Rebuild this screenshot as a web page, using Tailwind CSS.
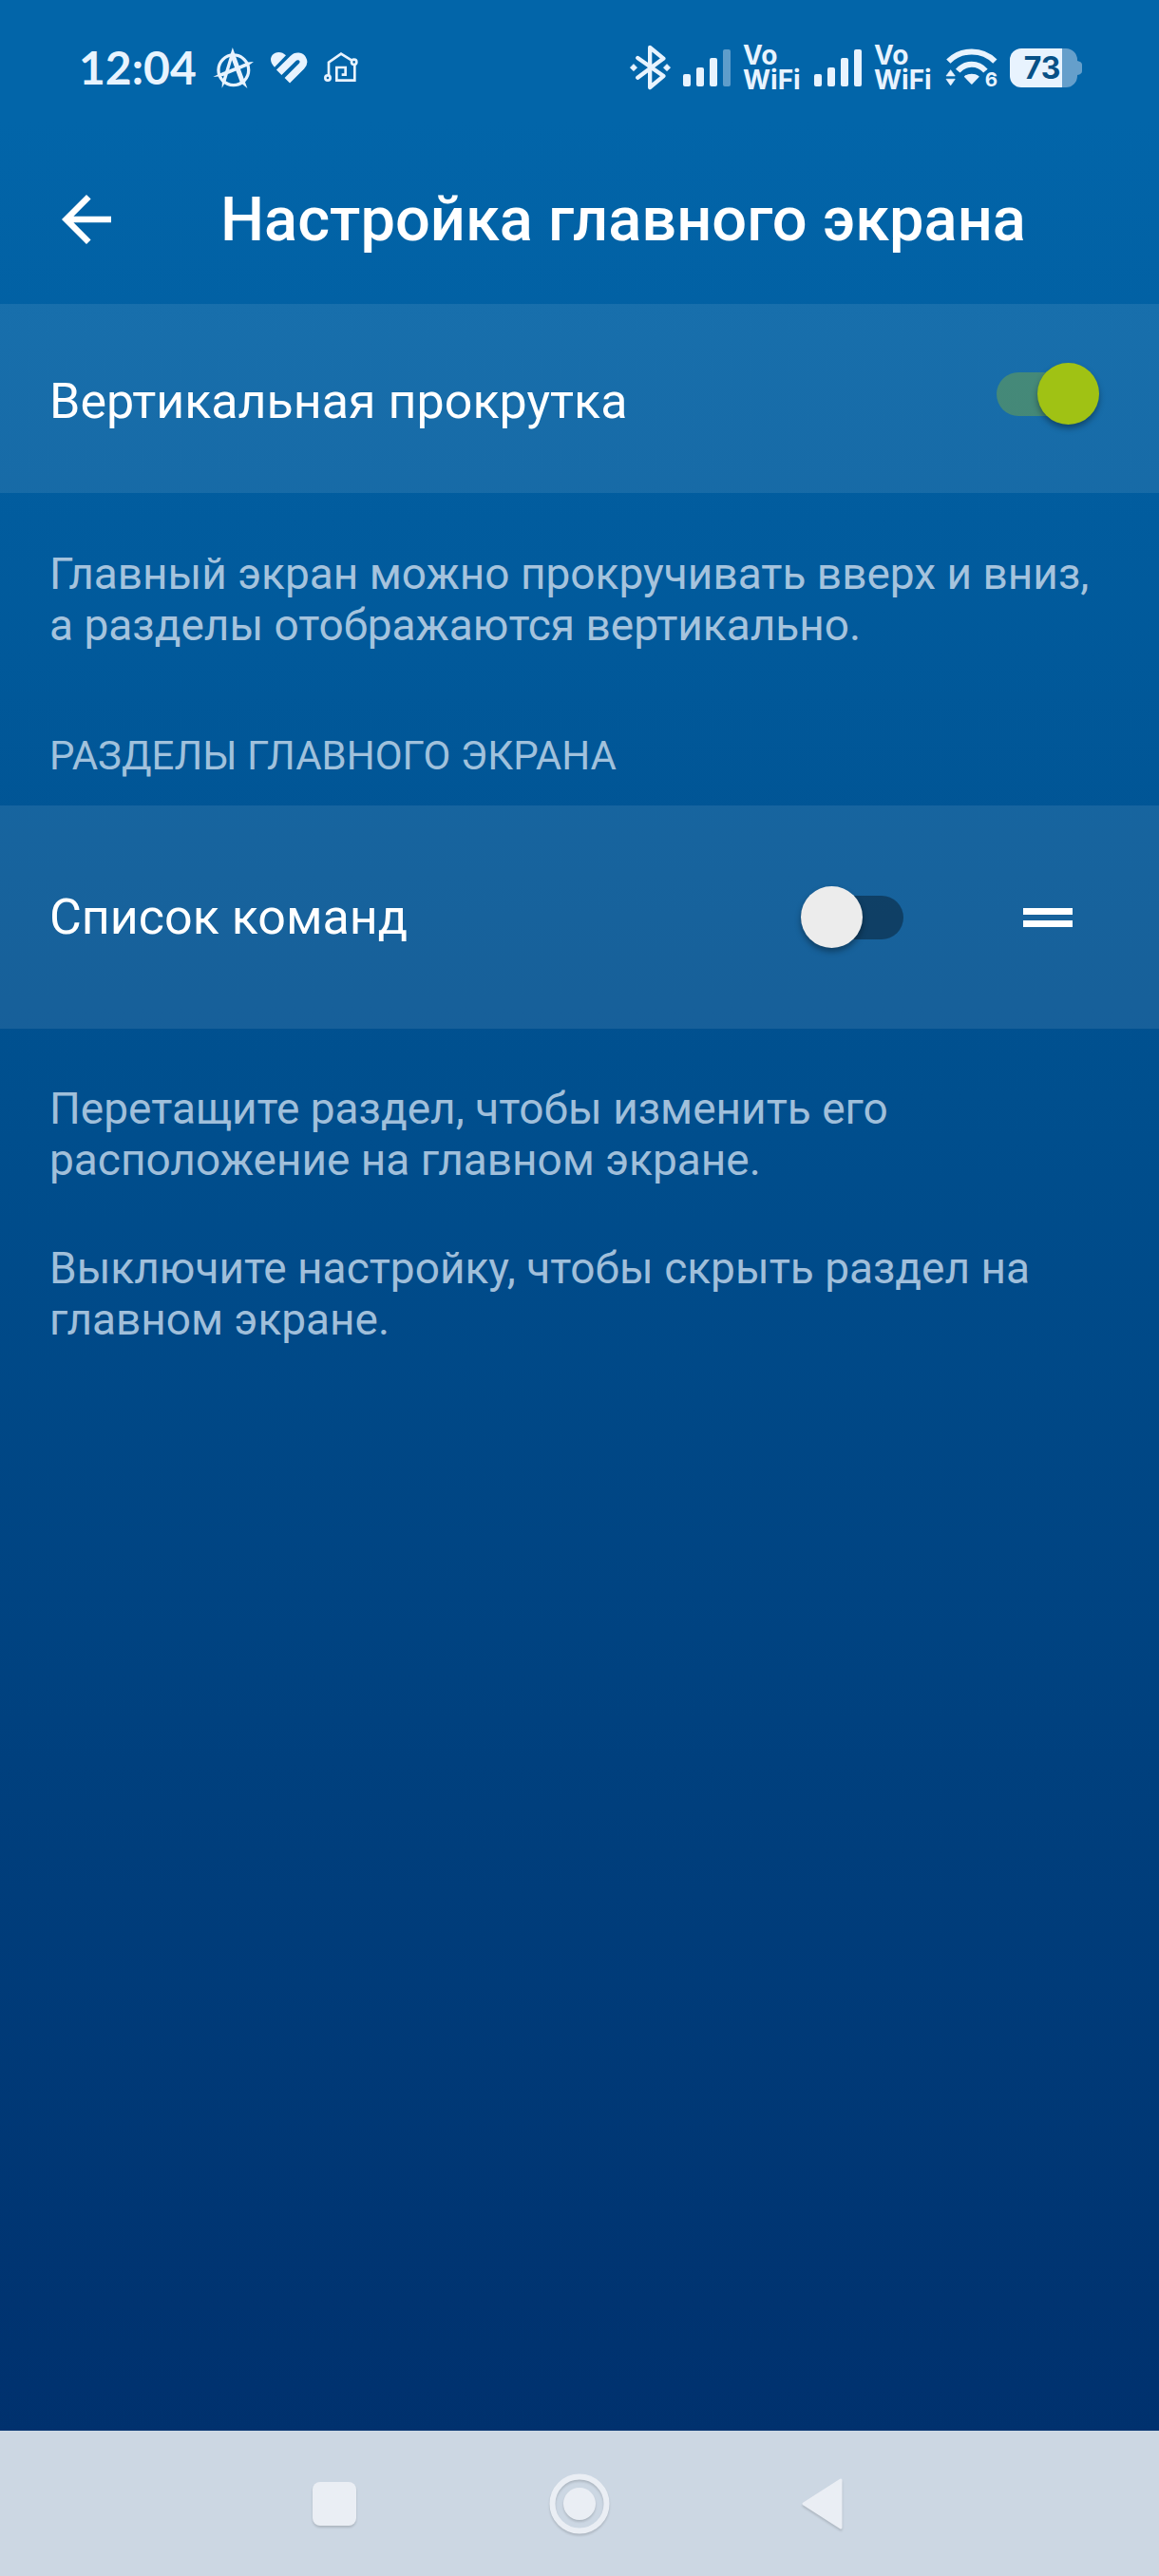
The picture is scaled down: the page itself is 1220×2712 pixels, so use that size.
<!DOCTYPE html>
<html lang="ru">
<head>
    <meta charset="UTF-8">
    <meta name="viewport" content="width=device-width, initial-scale=1.0">
    <title>Настройка главного экрана</title>
    <script src="https://cdn.jsdelivr.net/npm/@tailwindcss/browser@4"></script>
</head>
<body class="min-h-screen flex flex-col bg-[#003370] font-[Roboto,'Noto_Sans',sans-serif] text-white">
    <div class="flex-1 flex flex-col bg-linear-to-b/srgb from-[#0265a9] from-5% via-[#004f8e] via-45% to-[#00316e]">
        <!-- Status bar -->
        <div class="h-[142px] flex items-center justify-between pl-[83px] pr-[81px] text-[#e8f3fe]">
            <div class="flex items-center gap-[17px]">
                <span class="font-[Lato,sans-serif] text-[48px] leading-[60px] font-bold">12:04</span>
                <svg class="w-[43px] h-[43px]" viewBox="488 58 128 130" fill="currentColor">
                    <circle cx="553" cy="130" r="48" fill="none" stroke="currentColor" stroke-width="10"/>
                    <path d="M550 58L559 84L597 188L574 168L548 98L528 166L516 187L517 166L542 84z"/>
                    <path d="M488 152L508 141L598 105L617 103L600 116L520 149z"/>
                </svg>
                <svg class="w-[40px] h-[34px]" viewBox="666 72 120 102" fill="none">
                    <path d="M681 122C666 107 667 93 674 84C684 72 704 71 717 85z" fill="currentColor"/>
                    <path d="M695 139L739 95C750 84 765 87 770 97C775 106 772 113 766 119L721 164" stroke="currentColor" stroke-width="23"/>
                </svg>
                <svg class="w-[36px] h-[34px]" viewBox="846 72 108 102" fill="none" stroke="currentColor" stroke-width="8">
                    <path d="M861 148V107L900 80L934 101M943 114V164H886V123H914V146H902"/>
                    <circle cx="941" cy="106" r="8"/>
                    <circle cx="858" cy="156" r="8"/>
                </svg>
            </div>
            <div class="flex items-center gap-[13px]">
                <svg class="w-[43px] h-[48px]" viewBox="70 48 130 145" fill="currentColor">
                    <path d="M95 90L177 148L134 184V57L177 92L95 153" fill="none" stroke="currentColor" stroke-width="13" stroke-linecap="round" stroke-linejoin="round"/>
                    <path d="M82 110L93 121L82 132L71 121zM188 110L199 121L188 132L177 121z" stroke="currentColor" stroke-width="2" stroke-linejoin="round"/>
                </svg>
                <svg class="w-[50px] h-[39px]" viewBox="0 0 50 39" fill="currentColor">
                    <rect x="0" y="26" width="8" height="13" rx="2"/>
                    <rect x="14" y="19" width="8" height="20" rx="2"/>
                    <rect x="28" y="9" width="8" height="30" rx="2"/>
                    <rect x="42" y="0" width="8" height="39" rx="2" opacity="0.4"/>
                </svg>
                <span class="w-[62px] font-[Inter,sans-serif] text-[28px] leading-[26px] font-bold">Vo<br>WiFi</span>
                <svg class="w-[50px] h-[39px]" viewBox="0 0 50 39" fill="currentColor">
                    <rect x="0" y="26" width="8" height="13" rx="2"/>
                    <rect x="14" y="19" width="8" height="20" rx="2"/>
                    <rect x="28" y="9" width="8" height="30" rx="2"/>
                    <rect x="42" y="0" width="8" height="39" rx="2"/>
                </svg>
                <span class="w-[62px] font-[Inter,sans-serif] text-[28px] leading-[26px] font-bold">Vo<br>WiFi</span>
                <svg class="w-[55px] h-[42px] overflow-visible" viewBox="286 62 166 126" fill="currentColor">
                    <path d="M296 106C336 65 404 65 444 106M326 136C350 108 390 108 414 136" fill="none" stroke="currentColor" stroke-width="18"/>
                    <path d="M349 154C360 146 380 146 391 154L370 176z" stroke="currentColor" stroke-width="5" stroke-linejoin="round"/>
                    <path d="M303 133L317 152H289zM289 162H317L303 182z" stroke="currentColor" stroke-width="2" stroke-linejoin="round"/>
                    <text x="412" y="186" class="font-[Inter,sans-serif] text-[62px] font-bold">6</text>
                </svg>
                <svg class="w-[76px] h-[41px]" viewBox="0 0 76 41">
                    <path d="M55 0H59A12 12 0 0 1 71 12V13Q76 14 76 17V24Q76 27 71 28V29A12 12 0 0 1 59 41H55z" fill="#659fcb"/>
                    <path d="M12 0H55V41H12A12 12 0 0 1 0 29V12A12 12 0 0 1 12 0z" fill="currentColor"/>
                    <text x="34" y="32" text-anchor="middle" fill="#075187" class="font-[Inter,sans-serif] text-[32px] font-bold">73</text>
                </svg>
            </div>
        </div>

        <!-- Toolbar -->
        <header class="h-[178px] flex items-center px-[52px]">
            <button type="button" aria-label="Назад" class="shrink-0">
                <svg class="w-[78px] h-[78px]" viewBox="0 0 24 24" fill="currentColor">
                    <path d="M20 11H7.83l5.59-5.59L12 4l-8 8 8 8 1.41-1.41L7.83 13H20v-2z"/>
                </svg>
            </button>
            <h1 class="ml-[102px] text-[65px] leading-[76px] font-medium">Настройка главного экрана</h1>
        </header>

        <main>
            <div class="flex items-start justify-between pt-[72px] pb-[66px] pl-[52px] pr-[63px] bg-white/9">
                <label for="verticalScroll" class="text-[52px] leading-[61px]">Вертикальная прокрутка</label>
                <input id="verticalScroll" type="checkbox" role="switch" checked class="appearance-none relative w-[108px] h-[46px] rounded-full bg-black/35 checked:bg-[#a0c214]/33 before:absolute before:left-0 before:-top-[10px] before:size-[65px] before:rounded-full before:bg-[#ececec] before:shadow-[0_4px_6px_rgba(0,0,0,0.35)] checked:before:left-[43px] checked:before:bg-[#a0c214]">
            </div>
            <p class="px-[52px] pt-[58px] text-[46px] leading-[54px] text-[#a5c3dd]">Главный экран можно прокручивать вверх и вниз, а разделы отображаются вертикально.</p>

            <h2 class="px-[52px] pt-[86px] pb-[28px] text-[42px] leading-[49px] text-[#a0c1dc]">РАЗДЕЛЫ ГЛАВНОГО ЭКРАНА</h2>
            <div class="h-[235px] flex items-center pl-[52px] pr-[78px] bg-white/9">
                <label for="commandList" class="flex-1 text-[52px] leading-[61px]">Список команд</label>
                <input id="commandList" type="checkbox" role="switch" class="appearance-none relative w-[108px] h-[46px] rounded-full bg-black/35 checked:bg-[#a0c214]/33 before:absolute before:left-0 before:-top-[10px] before:size-[65px] before:rounded-full before:bg-[#ececec] before:shadow-[0_4px_6px_rgba(0,0,0,0.35)] checked:before:left-[43px] checked:before:bg-[#a0c214]">
                <button type="button" aria-label="Переместить раздел" class="ml-[113px]">
                    <svg class="w-[78px] h-[78px]" viewBox="0 0 78 78" fill="currentColor">
                        <path d="M13 29h52v7H13zM13 42h52v7H13z"/>
                    </svg>
                </button>
            </div>
            <div class="flex flex-col gap-[60px] px-[52px] pt-[57px] text-[46px] leading-[54px] text-[#a0bfda]">
                <p>Перетащите раздел, чтобы изменить его расположение на главном экране.</p>
                <p>Выключите настройку, чтобы скрыть раздел на главном экране.</p>
            </div>
        </main>
    </div>

    <!-- Navigation bar -->
    <nav class="h-[153px] flex items-center justify-center gap-[180px] bg-[#ccd7e3] text-[#eaeef4]">
        <button type="button" aria-label="Недавние">
            <svg class="w-[78px] h-[78px] drop-shadow-[0_2px_1px_rgba(0,0,0,0.15)]" viewBox="0 0 78 78" fill="currentColor">
                <rect x="16" y="16" width="46" height="46" rx="8"/>
            </svg>
        </button>
        <button type="button" aria-label="Домой">
            <svg class="w-[78px] h-[78px] drop-shadow-[0_2px_1px_rgba(0,0,0,0.15)]" viewBox="0 0 78 78" fill="currentColor">
                <circle cx="39" cy="39" r="28.5" fill="none" stroke="currentColor" stroke-width="6"/>
                <circle cx="39" cy="39" r="17"/>
            </svg>
        </button>
        <button type="button" aria-label="Назад">
            <svg class="w-[78px] h-[78px] drop-shadow-[0_2px_1px_rgba(0,0,0,0.15)]" viewBox="0 0 78 78" fill="currentColor">
                <path d="M17 39L56 14V64z" stroke="currentColor" stroke-width="3" stroke-linejoin="round"/>
            </svg>
        </button>
    </nav>
</body>
</html>
